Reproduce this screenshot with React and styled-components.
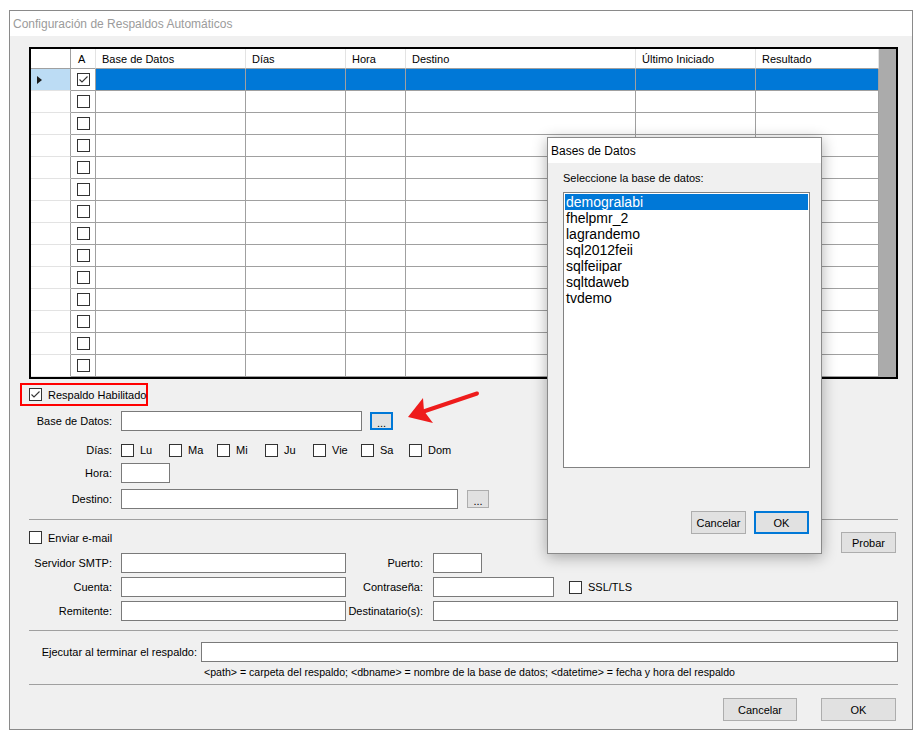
import React from "react";
import styled, { createGlobalStyle } from "styled-components";

const GlobalStyle = createGlobalStyle`
  html, body { margin: 0; padding: 0; background: #ffffff; }
  body { font-family: "Liberation Sans", Arial, sans-serif; font-size: 11px; color: #000; }
  * { box-sizing: border-box; }
`;

const Page = styled.div`
  width: 920px;
  height: 739px;
  padding: 10px 0 0 9px;
`;

const Window = styled.div`
  position: relative;
  width: 904px;
  height: 720px;
  border: 1px solid #8a8a8a;
  background: #f0f0f0;
  display: flex;
  flex-direction: column;
`;

const TitleBar = styled.div`
  flex: none;
  height: 25px;
  background: #ffffff;
  color: #9b9b9b;
  font-size: 12px;
  display: flex;
  align-items: center;
  padding-left: 3px;
`;

const Body = styled.div`
  flex: 1;
  padding: 11px 14px 0 19px;
  display: flex;
  flex-direction: column;
`;

/* ---------- grid ---------- */
const GridBox = styled.div`
  flex: none;
  width: 869px;
  height: 332px;
  border: 2px solid #000;
  background: #ababab;
`;

const GridRow = styled.div`
  display: flex;
`;

const HeadCell = styled.div`
  width: ${(p) => p.$w}px;
  height: 20px;
  background: #fff;
  border-right: 1px solid ${(p) => (p.$first ? "#a0a0a0" : "#e3e3e3")};
  border-bottom: 1px solid #a0a0a0;
  padding-left: ${(p) => p.$pl ?? 6}px;
  display: flex;
  align-items: center;
  white-space: nowrap;
`;

const RowHeader = styled.div`
  width: 40px;
  height: 22px;
  background: ${(p) => (p.$sel ? "#bcdcf4" : "#ffffff")};
  border-right: 1px solid #a0a0a0;
  border-bottom: 1px solid #e3e3e3;
  display: flex;
  align-items: center;
  padding-left: 6px;
`;

const CurrentMark = styled.span`
  width: 0;
  height: 0;
  border-left: 5px solid #1a1a1a;
  border-top: 4px solid transparent;
  border-bottom: 4px solid transparent;
`;

const Cell = styled.div`
  width: ${(p) => p.$w}px;
  height: 22px;
  background: ${(p) => (p.$sel ? "#0078d7" : "#ffffff")};
  border-right: 1px solid #a0a0a0;
  border-bottom: 1px solid #a0a0a0;
  display: flex;
  align-items: center;
  justify-content: ${(p) => (p.$center ? "center" : "flex-start")};
`;

/* ---------- controls ---------- */
const Box = styled.span`
  flex: none;
  width: 13px;
  height: 13px;
  border: 1px solid #333333;
  background: #ffffff;
  display: inline-flex;
  align-items: center;
  justify-content: center;
`;

const CheckBox = ({ checked }) => (
  <Box>
    {checked && (
      <svg width="11" height="11" viewBox="0 0 11 11">
        <polyline points="1.5,5.5 4,8 9.5,2.5" fill="none" stroke="#333" strokeWidth="1.1" />
      </svg>
    )}
  </Box>
);

const CheckItem = styled.div`
  display: flex;
  align-items: center;
  gap: 6px;
  width: ${(p) => (p.$w ? `${p.$w}px` : "auto")};
  margin-left: ${(p) => p.$ml || 0}px;
  flex: none;
  white-space: nowrap;
`;

const Marked = styled.div`
  align-self: flex-start;
  margin: 4px 0 0 -9px;
  width: 128px;
  height: 23px;
  border: 2px solid #ff0000;
  display: flex;
  align-items: center;
  gap: 6px;
  padding-left: 7px;
  white-space: nowrap;
`;

const FieldRow = styled.div`
  flex: none;
  display: flex;
  align-items: center;
  height: ${(p) => p.$h || 20}px;
  margin-top: ${(p) => p.$mt || 0}px;
`;

const Label = styled.span`
  flex: none;
  width: ${(p) => p.$w}px;
  margin-right: ${(p) => p.$mr ?? 9}px;
  text-align: right;
  white-space: nowrap;
`;

const TextBox = styled.div`
  flex: none;
  width: ${(p) => p.$w}px;
  height: 20px;
  border: 1px solid #7a7a7a;
  background: #ffffff;
`;

const Button = styled.button`
  flex: none;
  width: ${(p) => p.$w}px;
  height: ${(p) => p.$h || 23}px;
  margin: ${(p) => p.$m || "0"};
  background: #e1e1e1;
  border: ${(p) => (p.$focus ? "2px solid #0078d7" : "1px solid #adadad")};
  font-family: "Liberation Sans", Arial, sans-serif;
  font-size: 11px;
  color: #000;
  padding: 0;
  display: flex;
  align-items: center;
  justify-content: center;
`;

const Dots = styled.span`
  padding-top: 3px;
`;

const Separator = styled.div`
  flex: none;
  width: 869px;
  height: 1px;
  background: #a0a0a0;
  margin-top: ${(p) => p.$mt}px;
`;

const Hint = styled.div`
  flex: none;
  margin-top: 4px;
  padding-left: 175px;
  line-height: 13px;
  font-size: 10.6px;
  white-space: nowrap;
`;

const EmailTop = styled.div`
  flex: none;
  display: flex;
  justify-content: space-between;
  align-items: flex-start;
  height: 21px;
  margin-top: 11px;
`;

const Actions = styled.div`
  flex: none;
  display: flex;
  justify-content: flex-end;
  gap: 24px;
  margin-top: 13px;
  padding-right: 2px;
`;

/* ---------- dialog ---------- */
const Dialog = styled.div`
  position: absolute;
  left: 537px;
  top: 126px;
  width: 275px;
  height: 417px;
  border: 1px solid #8a8a8a;
  background: #f0f0f0;
  box-shadow: 0 3px 14px rgba(0, 0, 0, 0.32);
  display: flex;
  flex-direction: column;
`;

const DialogTitle = styled.div`
  flex: none;
  height: 25px;
  background: #ffffff;
  font-size: 12px;
  display: flex;
  align-items: center;
  padding-left: 3px;
`;

const DialogBody = styled.div`
  flex: 1;
  padding: 9px 12px 0 15px;
  display: flex;
  flex-direction: column;
`;

const Prompt = styled.div`
  line-height: 13px;
`;

const ListBox = styled.div`
  margin-top: 7px;
  width: 247px;
  height: 276px;
  border: 1px solid #828282;
  background: #ffffff;
  padding: 1px;
`;

const ListItem = styled.div`
  height: 16px;
  line-height: 16px;
  font-size: 14px;
  padding-left: 1px;
  background: ${(p) => (p.$sel ? "#0078d7" : "transparent")};
  color: ${(p) => (p.$sel ? "#ffffff" : "#000000")};
`;

const DialogButtons = styled.div`
  margin-top: 43px;
  display: flex;
  justify-content: flex-end;
  gap: 8px;
`;

const Arrow = styled.svg`
  position: absolute;
  left: 390px;
  top: 374px;
  overflow: visible;
`;

const columns = [
  { key: "A", w: 25, label: "A", pl: 7 },
  { key: "base", w: 150, label: "Base de Datos" },
  { key: "dias", w: 100, label: "Días" },
  { key: "hora", w: 60, label: "Hora" },
  { key: "dest", w: 230, label: "Destino" },
  { key: "ult", w: 120, label: "Último Iniciado" },
  { key: "res", w: 123, label: "Resultado" },
];

const days = ["Lu", "Ma", "Mi", "Ju", "Vie", "Sa", "Dom"];
const databases = ["demogralabi", "fhelpmr_2", "lagrandemo", "sql2012feii", "sqlfeiipar", "sqltdaweb", "tvdemo"];

export default function App() {
  const rows = Array.from({ length: 14 }, (_, i) => i);
  return (
    <>
      <GlobalStyle />
      <Page>
        <Window>
          <TitleBar>Configuración de Respaldos Automáticos</TitleBar>
          <Body>
            <GridBox>
              <GridRow>
                <HeadCell $w={40} $first />
                {columns.map((c) => (
                  <HeadCell key={c.key} $w={c.w} $pl={c.pl}>
                    {c.label}
                  </HeadCell>
                ))}
              </GridRow>
              {rows.map((r) => (
                <GridRow key={r}>
                  <RowHeader $sel={r === 0}>{r === 0 && <CurrentMark />}</RowHeader>
                  {columns.map((c) =>
                    c.key === "A" ? (
                      <Cell key={c.key} $w={c.w} $center>
                        <CheckBox checked={r === 0} />
                      </Cell>
                    ) : (
                      <Cell key={c.key} $w={c.w} $sel={r === 0} />
                    )
                  )}
                </GridRow>
              ))}
            </GridBox>

            <Marked>
              <CheckBox checked />
              <span>Respaldo Habilitado</span>
            </Marked>

            <FieldRow $mt={5}>
              <Label $w={83}>Base de Datos:</Label>
              <TextBox $w={241} />
              <Button $w={23} $h={18} $m="0 0 0 8px" $focus>
                <Dots>...</Dots>
              </Button>
            </FieldRow>

            <FieldRow $mt={9}>
              <Label $w={83}>Días:</Label>
              {days.map((d) => (
                <CheckItem key={d} $w={48}>
                  <CheckBox />
                  <span>{d}</span>
                </CheckItem>
              ))}
            </FieldRow>

            <FieldRow $mt={3}>
              <Label $w={83}>Hora:</Label>
              <TextBox $w={49} />
            </FieldRow>

            <FieldRow $mt={6}>
              <Label $w={83}>Destino:</Label>
              <TextBox $w={337} />
              <Button $w={22} $h={18} $m="0 0 0 9px">
                <Dots>...</Dots>
              </Button>
            </FieldRow>

            <Separator $mt={10} />

            <EmailTop>
              <CheckItem>
                <CheckBox />
                <span>Enviar e-mail</span>
              </CheckItem>
              <Button $w={55} $h={21} $m="1px 2px 0 0">
                Probar
              </Button>
            </EmailTop>

            <FieldRow $mt={1}>
              <Label $w={83}>Servidor SMTP:</Label>
              <TextBox $w={225} />
              <Label $w={77} $mr={10}>Puerto:</Label>
              <TextBox $w={49} />
            </FieldRow>

            <FieldRow $mt={4}>
              <Label $w={83}>Cuenta:</Label>
              <TextBox $w={225} />
              <Label $w={77} $mr={10}>Contraseña:</Label>
              <TextBox $w={121} />
              <CheckItem $ml={15}>
                <CheckBox />
                <span>SSL/TLS</span>
              </CheckItem>
            </FieldRow>

            <FieldRow $mt={4}>
              <Label $w={83}>Remitente:</Label>
              <TextBox $w={225} />
              <Label $w={77} $mr={10}>Destinatario(s):</Label>
              <TextBox $w={465} />
            </FieldRow>

            <Separator $mt={9} />

            <FieldRow $mt={11}>
              <Label $w={168} $mr={4}>Ejecutar al terminar el respaldo:</Label>
              <TextBox $w={697} />
            </FieldRow>

            <Hint>
              {"<path> = carpeta del respaldo; <dbname> = nombre de la base de datos; <datetime> = fecha y hora del respaldo"}
            </Hint>

            <Separator $mt={5} />

            <Actions>
              <Button $w={74}>Cancelar</Button>
              <Button $w={75}>OK</Button>
            </Actions>
          </Body>

          <Arrow width="85" height="45" viewBox="0 0 85 45">
            <line x1="77" y1="8.5" x2="22" y2="27" stroke="#ee1c1c" strokeWidth="4" strokeLinecap="round" />
            <polygon points="8,32 23,13 24,26 33,38" fill="#ee1c1c" />
          </Arrow>

          <Dialog>
            <DialogTitle>Bases de Datos</DialogTitle>
            <DialogBody>
              <Prompt>Seleccione la base de datos:</Prompt>
              <ListBox>
                {databases.map((d, i) => (
                  <ListItem key={d} $sel={i === 0}>
                    {d}
                  </ListItem>
                ))}
              </ListBox>
              <DialogButtons>
                <Button $w={55}>Cancelar</Button>
                <Button $w={55} $focus>
                  OK
                </Button>
              </DialogButtons>
            </DialogBody>
          </Dialog>
        </Window>
      </Page>
    </>
  );
}
